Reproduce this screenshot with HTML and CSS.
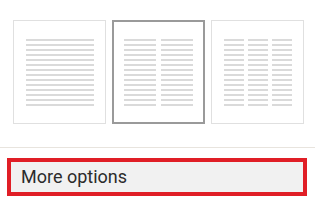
FILE: index.html
```html
<!DOCTYPE html>
<html>
<head>
<meta charset="utf-8">
<link rel="stylesheet" href="styles.css">
</head>
<body>
<div class="panel">
  <div class="thumbs">
    <div class="thumb">
      <div class="cols one">
        <div class="col"><i></i><i></i><i></i><i></i><i></i><i></i><i></i><i></i><i></i><i></i><i></i><i></i><i></i><i></i></div>
      </div>
    </div>
    <div class="thumb selected">
      <div class="cols two">
        <div class="col"><i></i><i></i><i></i><i></i><i></i><i></i><i></i><i></i><i></i><i></i><i></i><i></i><i></i><i></i></div>
        <div class="col"><i></i><i></i><i></i><i></i><i></i><i></i><i></i><i></i><i></i><i></i><i></i><i></i><i></i><i></i></div>
      </div>
    </div>
    <div class="thumb">
      <div class="cols three">
        <div class="col"><i></i><i></i><i></i><i></i><i></i><i></i><i></i><i></i><i></i><i></i><i></i><i></i><i></i><i></i></div>
        <div class="col"><i></i><i></i><i></i><i></i><i></i><i></i><i></i><i></i><i></i><i></i><i></i><i></i><i></i><i></i></div>
        <div class="col"><i></i><i></i><i></i><i></i><i></i><i></i><i></i><i></i><i></i><i></i><i></i><i></i><i></i><i></i></div>
      </div>
    </div>
  </div>
  <div class="sep"></div>
  <div class="more">More options</div>
</div>
</body>
</html>
```
FILE: styles.css
```css
html, body {
  margin: 0;
  padding: 0;
  background: #ffffff;
}
.panel {
  width: 317px;
  height: 207px;
  box-sizing: border-box;
  font-family: Roboto, "Liberation Sans", sans-serif;
}
.thumbs {
  display: flex;
  gap: 6px;
  padding: 20px 0 0 13px;
}
.thumb {
  width: 93px;
  height: 104px;
  box-sizing: border-box;
  border: 1px solid #e0e0e0;
  display: flex;
  justify-content: center;
  padding-top: 18px;
}
.thumb.selected {
  border: 2px solid #9a9a9a;
  padding-top: 17px;
}
.cols {
  display: flex;
}
.cols.one .col { width: 68px; }
.cols.two { gap: 5px; }
.cols.two .col { width: 32px; }
.cols.three { gap: 4px; }
.cols.three .col { width: 20px; }
.col {
  display: flex;
  flex-direction: column;
  gap: 3px;
}
.col i {
  display: block;
  height: 2px;
  background: #dadada;
}
.sep {
  height: 1px;
  background: #e8e4de;
  margin: 23px 2px 0 0;
}
.more {
  margin: 10px 10px 0 7px;
  height: 38px;
  box-sizing: border-box;
  border: 4px solid #e01e26;
  background: #f1f1f1;
  color: #2b2b2b;
  font-size: 18px;
  line-height: 30px;
  padding-left: 10px;
}
```
